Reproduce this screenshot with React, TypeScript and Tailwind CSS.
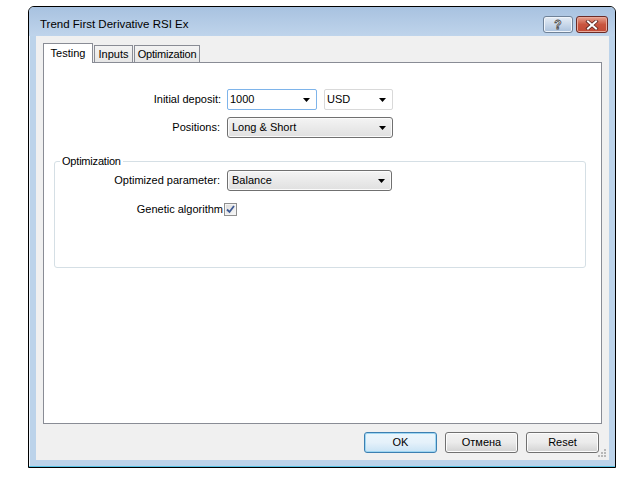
import React from "react";

const font = { fontFamily: '"Liberation Sans", Arial, sans-serif' };

const Arrow = () => (
  <svg width="7" height="4" viewBox="0 0 7 4" className="shrink-0">
    <path d="M0 0h7L3.5 4z" fill="#000" />
  </svg>
);

interface ComboProps {
  value: string;
  width: string;
  variant: "edit" | "plain" | "list";
}

const Combo: React.FC<ComboProps> = ({ value, width, variant }) => {
  const styles = {
    edit: "bg-white border-[#7eb4ea] rounded-[2px] pl-[2px]",
    plain: "bg-white border-[#d9d9d9] rounded-[2px] pl-[2px]",
    list: "bg-gradient-to-b from-[#f4f4f4] to-[#e0e0e0] border-[#707070] rounded-[3px] pl-[4px] shadow-[inset_0_0_0_1px_#fbfbfb]",
  }[variant];
  return (
    <div className={`${width} h-[21px] border flex items-center justify-between pr-[6px] ${styles}`}>
      <span className="text-[11px] leading-none">{value}</span>
      <Arrow />
    </div>
  );
};

const Button: React.FC<{ label: string; isDefault?: boolean }> = ({ label, isDefault }) => (
  <div
    className={`w-[73px] h-[21px] rounded-[3px] border flex items-center justify-center text-[11px] ${
      isDefault
        ? "border-[#3c7fb1] bg-gradient-to-b from-[#eaf6fd] via-[#e5f1fa] to-[#c9e3f5] shadow-[inset_0_0_0_1px_#9ed6f2]"
        : "border-[#707070] bg-gradient-to-b from-[#f2f2f2] via-[#ebebeb] to-[#d2d2d2] shadow-[inset_0_0_0_1px_#fcfcfc]"
    }`}
  >
    {label}
  </div>
);

export default function App() {
  return (
    <div className="w-[640px] h-[480px] bg-white pt-[6px] pl-[28px] text-black" style={font}>
      <div className="w-[588px] h-[462px] border border-black rounded-t-[6px] bg-[#bcd3ea] flex flex-col shadow-[inset_0_-1px_0_#56c2e4,inset_1px_1px_0_#eef4fb]">
        {/* title bar */}
        <div className="h-[29px] flex items-start pt-[9px] pl-[11px] pr-[7px] bg-gradient-to-b from-[#a8c2e0] to-[#bfd4eb] rounded-t-[5px]">
          <span className="flex-1 text-[11.5px] leading-[17px]">Trend First Derivative RSI Ex</span>
          <div className="flex gap-[3px]">
            <div className="w-[30px] h-[17px] rounded-[3px] border border-[#6f8298] bg-gradient-to-b from-[#e6edf5] via-[#c9d8ea] to-[#aac1dc] flex items-center justify-center shadow-[inset_0_0_0_1px_#f0f5fb]">
              <span className="text-[12px] font-bold leading-none text-[#f4f4f4] [-webkit-text-stroke:0.8px_#4a4a4a]">?</span>
            </div>
            <div className="w-[32px] h-[17px] rounded-[3px] border border-[#6b2b26] bg-gradient-to-b from-[#e6a190] via-[#c9553f] to-[#c24a36] flex items-center justify-center shadow-[inset_0_0_0_1px_#e9a99a]">
              <svg width="14" height="10" viewBox="0 0 14 10">
                <path d="M3 1.5L11 8.5M11 1.5L3 8.5" stroke="#5a2520" strokeWidth="3.6" strokeLinecap="square" />
                <path d="M3 1.5L11 8.5M11 1.5L3 8.5" stroke="#fff" strokeWidth="2" strokeLinecap="square" />
              </svg>
            </div>
          </div>
        </div>

        {/* client area */}
        <div className="flex-1 pl-[7px] pr-[6px] pb-[7px] flex">
          <div className="relative flex-1 bg-[#f0f0f0] pt-[7px] px-[7px] flex flex-col">
            <div className="h-[20px] flex items-end -mb-px relative z-10 text-[11px]">
              <div className="w-[50px] h-[20px] border-x border-t border-[#898c95] bg-white flex items-center justify-center pb-[1px]">
                Testing
              </div>
              <div className="ml-px w-[39px] h-[18px] border border-[#898c95] bg-gradient-to-b from-[#f3f3f3] to-[#e6e6e6] flex items-center justify-center">
                Inputs
              </div>
              <div className="ml-px w-[66px] h-[18px] border border-[#898c95] bg-gradient-to-b from-[#f3f3f3] to-[#e6e6e6] flex items-center justify-center tracking-[-0.2px]">
                Optimization
              </div>
            </div>

            <div className="h-[362px] border border-[#898c95] bg-white pt-[26px] text-[11px]">
              <div className="flex items-center">
                <span className="w-[177px] text-right">Initial deposit:</span>
                <div className="ml-[6px]">
                  <Combo value="1000" width="w-[90px]" variant="edit" />
                </div>
                <div className="ml-[7px]">
                  <Combo value="USD" width="w-[69px]" variant="plain" />
                </div>
              </div>
              <div className="flex items-center mt-[7px]">
                <span className="w-[176px] text-right">Positions:</span>
                <div className="ml-[7px]">
                  <Combo value="Long & Short" width="w-[166px]" variant="list" />
                </div>
              </div>

              <fieldset className="ml-[10px] mr-[15px] mt-[17px] h-[113px] border border-[#d5dfe5] rounded-[3px]">
                <legend className="ml-[5px] px-[2px] leading-[13px] tracking-[-0.2px]">Optimization</legend>
                <div className="flex items-center mt-[2px]">
                  <span className="w-[165px] text-right">Optimized parameter:</span>
                  <div className="ml-[7px]">
                    <Combo value="Balance" width="w-[165px]" variant="list" />
                  </div>
                </div>
                <div className="flex items-center mt-[10px]">
                  <span className="w-[168px] text-right">Genetic algorithm</span>
                  <div className="ml-[1px] w-[13px] h-[13px] border border-[#8f8f8f] bg-gradient-to-br from-[#dcdcdc] to-[#f8f8f8] flex items-center justify-center shadow-[inset_0_0_0_1px_#f4f4f4]">
                    <svg width="9" height="9" viewBox="0 0 9 9">
                      <path d="M1 4.5L3.5 7L8 1" stroke="#3f5a94" strokeWidth="1.8" fill="none" />
                    </svg>
                  </div>
                </div>
              </fieldset>
            </div>

            <div className="mt-[8px] flex justify-end gap-[8px] pr-[3px]">
              <Button label="OK" isDefault />
              <Button label="Отмена" />
              <Button label="Reset" />
            </div>

            <svg className="absolute right-[2px] bottom-[2px]" width="10" height="10" viewBox="0 0 10 10">
              <g fill="#b8b8b8">
                <rect x="7" y="1" width="2" height="2" />
                <rect x="4" y="4" width="2" height="2" />
                <rect x="7" y="4" width="2" height="2" />
                <rect x="1" y="7" width="2" height="2" />
                <rect x="4" y="7" width="2" height="2" />
                <rect x="7" y="7" width="2" height="2" />
              </g>
            </svg>
          </div>
        </div>
      </div>
    </div>
  );
}
